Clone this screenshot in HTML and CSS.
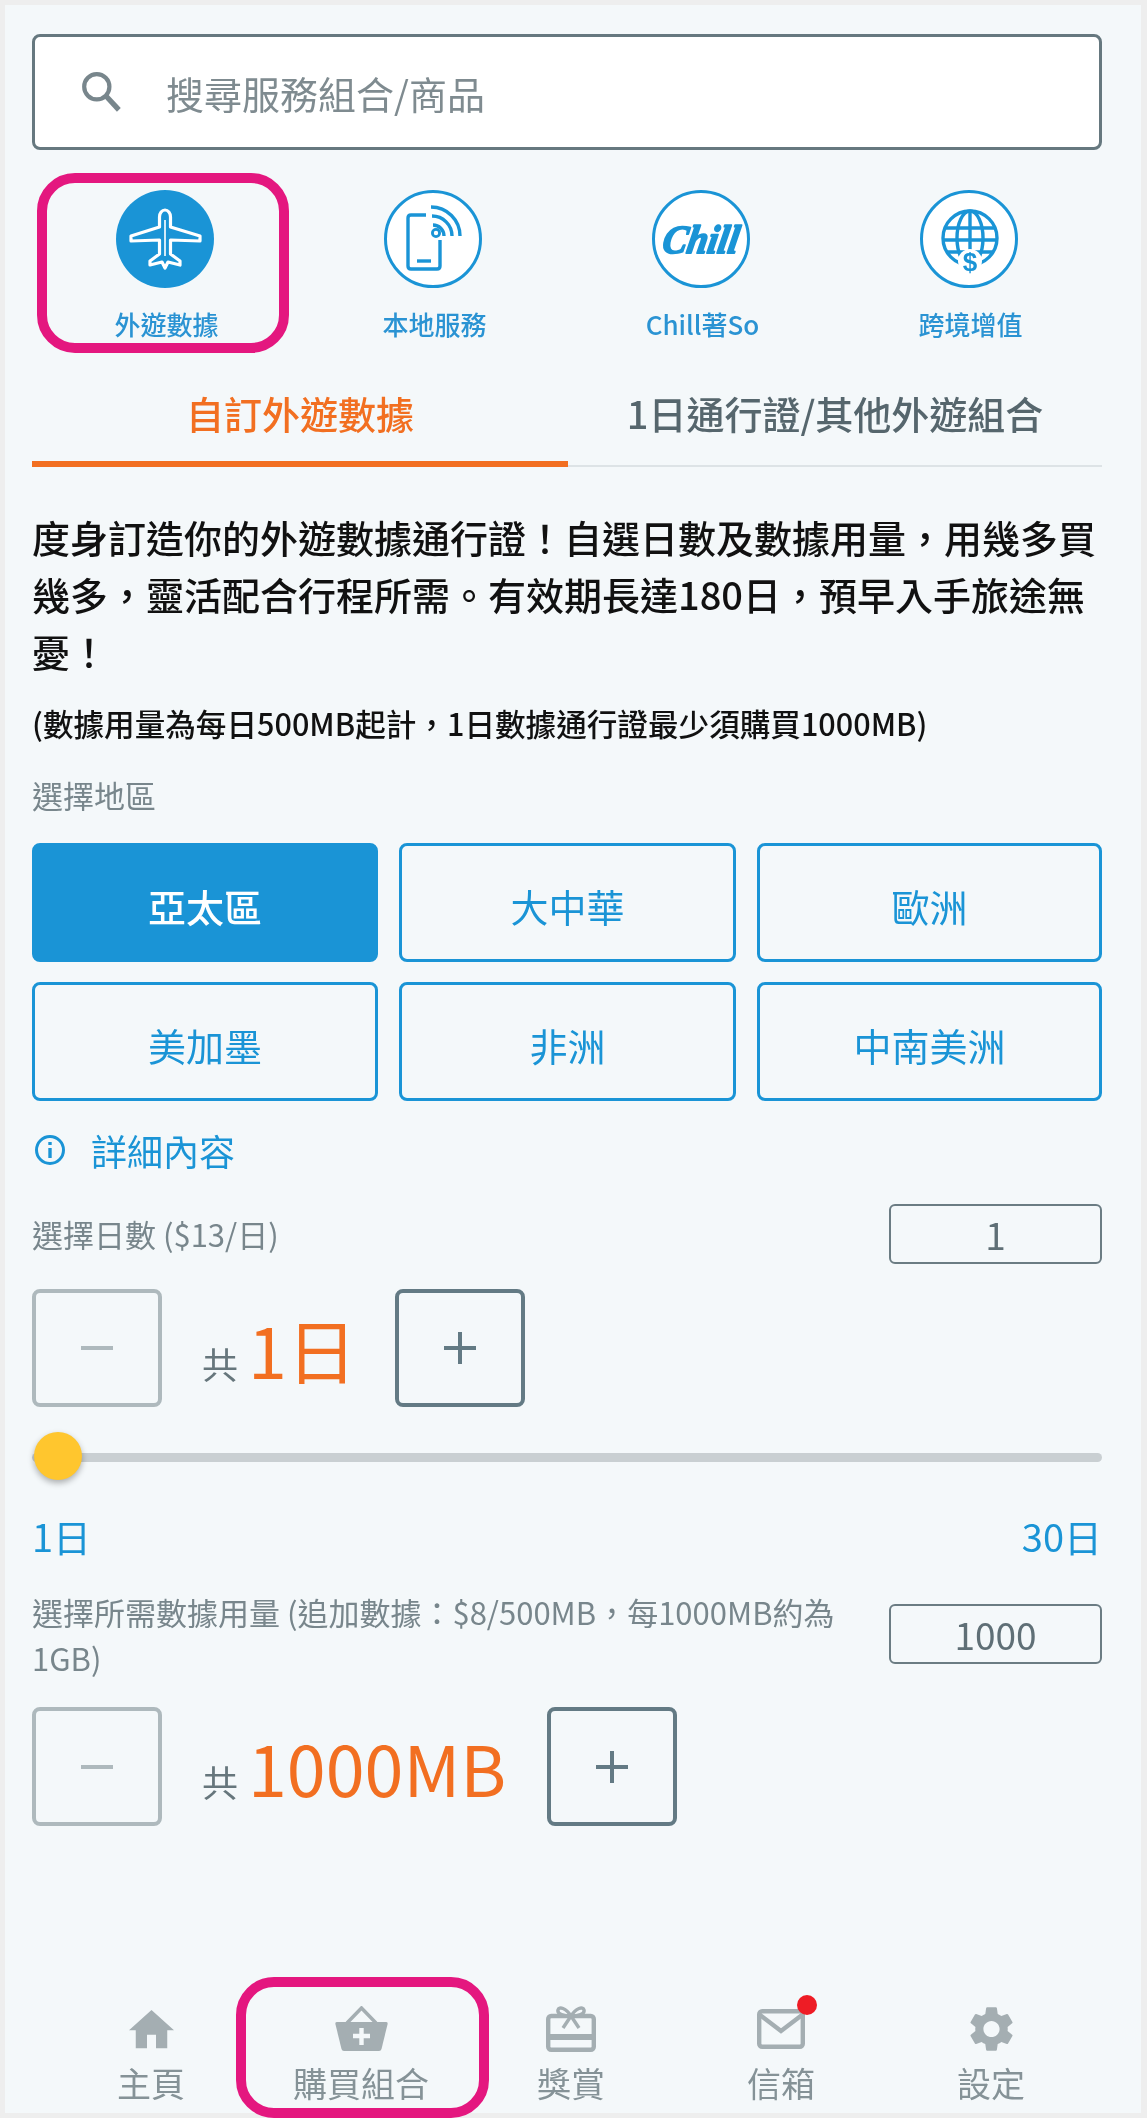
FILE: index.html
```html
<!DOCTYPE html>
<html lang="zh-Hant">
<head>
    <meta charset="UTF-8">
    <meta name="viewport" content="width=device-width, initial-scale=1.0">
    <title>購買組合</title>
    <link rel="stylesheet" href="styles.css">
</head>
<body>
    <div class="panel">
        <!-- Search -->
        <div class="search">
            <svg class="search-icon" viewBox="0 0 38 40" fill="none" stroke="#78868c">
                <circle cx="15" cy="15" r="12" stroke-width="4"/>
                <path d="M24 24 L36 37" stroke-width="5"/>
            </svg>
            <span class="search-text">搜尋服務組合/商品</span>
        </div>

        <!-- Service categories -->
        <div class="categories">
            <div class="category">
                <span class="highlight highlight-top"></span>
                <svg class="category-icon" viewBox="0 0 98 98">
                    <circle cx="49" cy="49" r="49" fill="#1a94d6"/>
                    <path d="M49 20 C46 20 43.5 23 43.5 27 V37 L15 46 V51 L43.5 50 V64 L34 71 V75 L46 72 L49 78 L52 72 L64 75 V71 L54.5 64 V50 L84 51 V46 L54.5 37 V27 C54.5 23 52 20 49 20 Z" fill="none" stroke="#fff" stroke-width="3.2" stroke-linejoin="round"/>
                    <path d="M49 30 V66" stroke="#d3ebf8" stroke-width="2"/>
                </svg>
                <span class="category-label">外遊數據</span>
            </div>
            <div class="category">
                <svg class="category-icon" viewBox="0 0 98 98" fill="none" stroke="#1a94d6">
                    <circle cx="49" cy="49" r="47.5" fill="#fff" stroke-width="3"/>
                    <path d="M42 25 H27 Q24 25 24 28 V76 Q24 79 27 79 H53 Q56 79 56 76 V50" stroke-width="3.4"/>
                    <path d="M33 71 H47" stroke-width="3.4"/>
                    <circle cx="52" cy="43" r="3.6" stroke-width="2.8"/>
                    <path d="M49 35 A11 11 0 0 1 60 46 M48 26 A20 20 0 0 1 68 46 M47 17 A29 29 0 0 1 76 46" stroke-width="3.4"/>
                </svg>
                <span class="category-label">本地服務</span>
            </div>
            <div class="category">
                <svg class="category-icon" viewBox="0 0 98 98">
                    <circle cx="49" cy="49" r="47.5" fill="#fff" stroke="#1a94d6" stroke-width="3"/>
                    <text class="chill-logo" x="20" y="63" textLength="76" lengthAdjust="spacingAndGlyphs">Chill</text>
                </svg>
                <span class="category-label">Chill著So</span>
            </div>
            <div class="category">
                <svg class="category-icon" viewBox="0 0 98 98" fill="none" stroke="#1a94d6">
                    <circle cx="49" cy="49" r="47.5" fill="#fff" stroke-width="3"/>
                    <g stroke-width="3.4">
                        <circle cx="50" cy="48" r="27"/>
                        <ellipse cx="50" cy="48" rx="13" ry="27"/>
                        <path d="M50 21 V60 M24 38 H76 M23 50 H77 M27 62 H73"/>
                    </g>
                    <circle cx="50" cy="71" r="12" fill="#fff" stroke="none"/>
                    <text class="globe-dollar" x="50" y="81">$</text>
                </svg>
                <span class="category-label">跨境增值</span>
            </div>
        </div>

        <!-- Tabs -->
        <div class="tabs">
            <div class="tab tab-active">自訂外遊數據</div>
            <div class="tab">1日通行證/其他外遊組合</div>
        </div>

        <p class="intro">度身訂造你的外遊數據通行證&#xFF01;自選日數及數據用量&#xFF0C;用幾多買幾多&#xFF0C;靈活配合行程所需。有效期長達180日&#xFF0C;預早入手旅途無憂&#xFF01;</p>
        <p class="note">(數據用量為每日500MB起計&#xFF0C;1日數據通行證最少須購買1000MB)</p>

        <!-- Region -->
        <div class="field-label region-label">選擇地區</div>
        <div class="regions">
            <div class="region region-active">亞太區</div>
            <div class="region">大中華</div>
            <div class="region">歐洲</div>
            <div class="region">美加墨</div>
            <div class="region">非洲</div>
            <div class="region">中南美洲</div>
        </div>

        <div class="details">
            <svg class="details-icon" viewBox="0 0 32 32" fill="none" stroke="#1a94d6">
                <circle cx="16" cy="16" r="13.5" stroke-width="3"/>
                <path d="M16 14 V24" stroke-width="3.4"/>
                <path d="M16 8 V11" stroke-width="3.4"/>
            </svg>
            <span>詳細內容</span>
        </div>

        <!-- Days -->
        <div class="field-row days-row">
            <div class="field-label">選擇日數 ($13/日)</div>
            <div class="amount-box">1</div>
        </div>
        <div class="stepper">
            <div class="step-btn step-off">
                <svg viewBox="0 0 32 32"><path d="M0 16 H32" stroke-width="4"/></svg>
            </div>
            <div class="total">
                <span class="total-prefix">共</span>
                <span class="total-value">1日</span>
            </div>
            <div class="step-btn">
                <svg viewBox="0 0 32 32"><path d="M0 16 H32 M16 0 V32" stroke-width="4"/></svg>
            </div>
        </div>

        <div class="slider"><span class="slider-thumb"></span></div>
        <div class="slider-scale">
            <span>1日</span>
            <span>30日</span>
        </div>

        <!-- Data usage -->
        <div class="field-row data-row">
            <div class="field-label data-label">選擇所需數據用量 (追加數據&#xFF1A;$8/500MB&#xFF0C;每1000MB約為1GB)</div>
            <div class="amount-box data-box">1000</div>
        </div>
        <div class="stepper stepper-data">
            <div class="step-btn step-off">
                <svg viewBox="0 0 32 32"><path d="M0 16 H32" stroke-width="4"/></svg>
            </div>
            <div class="total">
                <span class="total-prefix">共</span>
                <span class="total-value">1000MB</span>
            </div>
            <div class="step-btn">
                <svg viewBox="0 0 32 32"><path d="M0 16 H32 M16 0 V32" stroke-width="4"/></svg>
            </div>
        </div>

        <!-- Bottom navigation -->
        <div class="bottom-nav">
            <div class="nav-item">
                <div class="nav-icon">
                    <svg class="icon-home" viewBox="2 3 20 17" fill="#a4aeb2"><path d="M10 20v-6h4v6h5v-8h3L12 3 2 12h3v8z"/></svg>
                </div>
                <span class="nav-label">主頁</span>
            </div>
            <div class="nav-item">
                <span class="highlight highlight-bottom"></span>
                <div class="nav-icon">
                    <svg class="icon-basket" viewBox="0 0 53 46">
                        <path d="M12 17 L26.5 2 L41 17" fill="none" stroke="#a4aeb2" stroke-width="3.5"/>
                        <path d="M2 16 H51 Q53 16 52.6 18 L46.5 43 Q46 45 44 45 H9 Q7 45 6.5 43 L0.4 18 Q0 16 2 16 Z" fill="#a4aeb2"/>
                        <path d="M18 30 H35 M26.5 22 V39" stroke="#f4f8fa" stroke-width="4.4"/>
                    </svg>
                </div>
                <span class="nav-label">購買組合</span>
            </div>
            <div class="nav-item">
                <div class="nav-icon">
                    <svg class="icon-gift" viewBox="0 0 50 46" fill="none" stroke="#a4aeb2" stroke-width="4.4">
                        <rect x="2.2" y="10" width="45.6" height="33.8" rx="3"/>
                        <path d="M2 31 H48" stroke-width="6"/>
                        <path d="M25 10 C20 2 13 0 12 4 C11 8 18 10 25 10 C32 10 39 8 38 4 C37 0 30 2 25 10 Z" fill="#f4f8fa" stroke-width="3.4"/>
                        <path d="M25 10 L17 22 M25 10 L33 22" stroke-width="3.4"/>
                    </svg>
                </div>
                <span class="nav-label">獎賞</span>
            </div>
            <div class="nav-item">
                <div class="nav-icon">
                    <span class="mail-wrap">
                        <svg class="icon-mail" viewBox="0 0 48 40" fill="none" stroke="#a4aeb2" stroke-width="4.4">
                            <rect x="2.2" y="2.2" width="43.6" height="35.6" rx="3"/>
                            <path d="M3 6 L24 22 L45 6"/>
                        </svg>
                        <span class="mail-dot"></span>
                    </span>
                </div>
                <span class="nav-label">信箱</span>
            </div>
            <div class="nav-item">
                <div class="nav-icon">
                    <svg class="icon-gear" viewBox="2.2 1.8 19.6 20.4" fill="#a4aeb2"><path d="M19.14 12.94c.04-.3.06-.61.06-.94 0-.32-.02-.64-.07-.94l2.03-1.58c.18-.14.23-.41.12-.61l-1.92-3.32c-.12-.22-.37-.29-.59-.22l-2.39.96c-.5-.38-1.03-.7-1.62-.94l-.36-2.54c-.04-.24-.24-.41-.48-.41h-3.84c-.24 0-.43.17-.47.41l-.36 2.54c-.59.24-1.13.57-1.62.94l-2.39-.96c-.22-.08-.47 0-.59.22L2.74 8.87c-.12.21-.08.47.12.61l2.03 1.58c-.05.3-.09.63-.09.94s.02.64.07.94l-2.03 1.58c-.18.14-.23.41-.12.61l1.92 3.32c.12.22.37.29.59.22l2.39-.96c.5.38 1.03.7 1.62.94l.36 2.54c.05.24.24.41.48.41h3.84c.24 0 .44-.17.47-.41l.36-2.54c.59-.24 1.13-.56 1.62-.94l2.39.96c.22.08.47 0 .59-.22l1.92-3.32c.12-.22.07-.47-.12-.61l-2.01-1.58zM12 15.6c-1.98 0-3.6-1.62-3.6-3.6s1.62-3.6 3.6-3.6 3.6 1.62 3.6 3.6-1.62 3.6-3.6 3.6z"/></svg>
                </div>
                <span class="nav-label">設定</span>
            </div>
        </div>
    </div>
</body>
</html>
```

FILE: styles.css
```css
/* General Styling */
html, body {
    height: 100%;
}

body {
    margin: 0;
    padding: 5px 6px 5px 5px;
    box-sizing: border-box;
    background: #eeeeee;
    font-family: "Noto Sans CJK SC", "Noto Sans", sans-serif;
    color: #111;
    overflow: hidden;
}

.panel {
    height: 100%;
    box-sizing: border-box;
    padding: 29px 39px 10px 27px;
    background: #f4f8fa;
    display: flex;
    flex-direction: column;
    filter: blur(0.5px);
}

/* Search */
.search {
    height: 116px;
    flex: none;
    box-sizing: border-box;
    padding-left: 46px;
    display: flex;
    align-items: center;
    gap: 45px;
    background: #fff;
    border: 3px solid #66787f;
    border-radius: 8px;
}

.search-icon {
    width: 40px;
    height: 42px;
}

.search-text {
    font-size: 38px;
    color: #7f8b90;
}

/* Categories */
.categories {
    display: grid;
    grid-template-columns: repeat(4, 268px);
    margin-top: 40px;
    margin-left: -1px;
}

.category {
    position: relative;
    display: flex;
    flex-direction: column;
    align-items: center;
}

.category-icon {
    width: 98px;
    height: 98px;
}

.category-label {
    margin-top: 18px;
    margin-left: 3px;
    font-size: 26px;
    line-height: 36px;
    font-weight: 500;
    color: #2a93d3;
}

.chill-logo {
    font-family: "Liberation Serif", serif;
    font-style: italic;
    font-weight: bold;
    font-size: 40px;
    fill: #1a94d6;
    stroke: #1a94d6;
    stroke-width: 1.8px;
    stroke-linejoin: round;
    transform: skewX(-10deg);
}

.globe-dollar {
    font-family: "Liberation Sans", sans-serif;
    font-weight: bold;
    font-size: 26px;
    text-anchor: middle;
    fill: #1a94d6;
    stroke: none;
}

/* Magenta callouts drawn over the page */
.highlight {
    position: absolute;
    box-sizing: border-box;
    border: 10px solid #e4177f;
    border-radius: 38px;
    z-index: 2;
}

.highlight-top {
    left: 6px;
    top: -17px;
    width: 252px;
    height: 180px;
}

.highlight-bottom {
    left: -20px;
    top: -29px;
    width: 253px;
    height: 141px;
}

/* Tabs */
.tabs {
    display: grid;
    grid-template-columns: 536px 1fr;
    margin-top: 30px;
    flex: none;
}

.tab {
    height: 95px;
    box-sizing: border-box;
    padding-top: 17px;
    font-size: 38px;
    line-height: 48px;
    font-weight: 500;
    text-align: center;
    color: #56666d;
    border-bottom: 2px solid #dde3e6;
}

.tab-active {
    color: #f26f21;
    border-bottom: 6px solid #f26f21;
}

/* Intro text */
.intro {
    margin: 41px 0 0;
    font-size: 38px;
    line-height: 57px;
    font-weight: 500;
}

.note {
    margin: 22px 0 0;
    font-size: 30.6px;
    line-height: 44px;
    font-weight: 500;
    white-space: nowrap;
}

.field-label {
    font-size: 31px;
    line-height: 44px;
    color: #78868c;
}

.region-label {
    margin-top: 28px;
}

/* Regions */
.regions {
    display: grid;
    grid-template-columns: 346px 337px 345px;
    grid-auto-rows: 119px;
    gap: 20px 21px;
    margin-top: 26px;
}

.region {
    display: flex;
    align-items: center;
    justify-content: center;
    box-sizing: border-box;
    padding-top: 6px;
    border: 3px solid #1a94d6;
    border-radius: 8px;
    font-size: 38px;
    color: #1a94d6;
}

.region-active {
    background: #1a94d6;
    color: #fff;
    font-weight: 500;
}

.details {
    margin-top: 27px;
    margin-bottom: 2px;
    display: flex;
    align-items: center;
    gap: 25px;
    font-size: 36px;
    line-height: 44px;
    color: #1a94d6;
}

.details-icon {
    width: 32px;
    height: 32px;
    margin-left: 2px;
}

/* Number fields */
.field-row {
    display: flex;
    justify-content: space-between;
}

.days-row {
    margin-top: 30px;
    align-items: center;
}

.amount-box {
    width: 213px;
    height: 60px;
    flex: none;
    box-sizing: border-box;
    border: 2px solid #6b7c83;
    border-radius: 6px;
    font-size: 37px;
    line-height: 56px;
    text-align: center;
    color: #5f6f76;
}

.stepper {
    display: flex;
    align-items: center;
    margin-top: 25px;
    height: 118px;
    flex: none;
}

.step-btn {
    width: 130px;
    height: 100%;
    box-sizing: border-box;
    border: 4px solid #637a84;
    border-radius: 8px;
    display: flex;
    align-items: center;
    justify-content: center;
}

.step-btn svg {
    width: 32px;
    height: 32px;
    stroke: #637a84;
}

.step-off {
    border-color: #aeb9bd;
}

.step-off svg {
    stroke: #aeb9bd;
}

.total {
    margin: 0 38px 0 40px;
    display: flex;
    align-items: baseline;
    gap: 10px;
}

.total-prefix {
    font-size: 36px;
    color: #66767c;
}

.total-value {
    font-size: 70px;
    color: #f26f21;
}

/* Slider */
.slider {
    position: relative;
    height: 48px;
    margin-top: 25px;
    flex: none;
}

.slider::before {
    content: "";
    position: absolute;
    left: 0;
    right: 0;
    top: 21px;
    height: 9px;
    border-radius: 5px;
    background: #c9cfd2;
}

.slider-thumb {
    position: absolute;
    left: 2px;
    top: 0;
    width: 48px;
    height: 48px;
    border-radius: 50%;
    background: #ffc62e;
    box-shadow: 0 3px 6px rgba(0, 0, 0, 0.3);
}

.slider-scale {
    margin-top: 31px;
    margin-bottom: 2px;
    display: flex;
    justify-content: space-between;
    font-size: 38px;
    line-height: 50px;
    color: #1a94d6;
}

/* Data row */
.data-row {
    margin-top: 26px;
    align-items: flex-start;
}

.data-label {
    width: 835px;
    line-height: 46px;
}

.data-box {
    margin-top: 15px;
}

.stepper-data {
    margin-top: 26px;
    height: 119px;
}

.stepper-data .total {
    margin-right: 41px;
}

/* Bottom navigation */
.bottom-nav {
    margin-top: auto;
    margin-left: 14px;
    display: grid;
    grid-template-columns: repeat(5, 210px);
}

.nav-item {
    position: relative;
    display: flex;
    flex-direction: column;
    align-items: center;
}

.nav-icon {
    height: 46px;
    display: flex;
    align-items: center;
    justify-content: center;
}

.nav-label {
    margin-top: 11px;
    font-size: 34px;
    line-height: 40px;
    color: #859297;
}

.icon-home {
    width: 45px;
    height: 40px;
}

.icon-basket {
    width: 53px;
    height: 46px;
}

.icon-gift {
    width: 50px;
    height: 46px;
}

.icon-mail {
    width: 48px;
    height: 40px;
    display: block;
}

.icon-gear {
    width: 45px;
    height: 46px;
}

.mail-wrap {
    position: relative;
    display: block;
}

.mail-dot {
    position: absolute;
    right: -12px;
    top: -14px;
    width: 20px;
    height: 20px;
    border-radius: 50%;
    background: #ee1c25;
}
```
